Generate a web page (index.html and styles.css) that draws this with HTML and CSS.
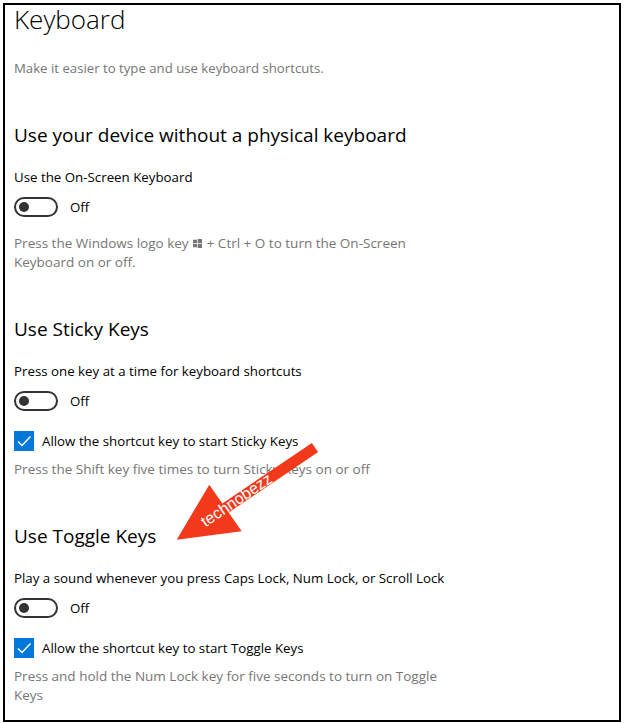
FILE: index.html
```html
<!DOCTYPE html>
<html lang="en">
<head>
    <meta charset="utf-8" />
    <meta name="viewport" content="width=device-width, initial-scale=1" />
    <title>Keyboard - Settings</title>
    <link rel="stylesheet" href="styles.css">
</head>
<body>
    <div class="frame">
        <h1 class="page-title">Keyboard</h1>
        <p class="page-desc">Make it easier to type and use keyboard shortcuts.</p>

        <section class="group">
            <h2 class="group-title">Use your device without a physical keyboard</h2>
            <p class="setting-label">Use the On-Screen Keyboard</p>
            <div class="toggle-row">
                <span class="toggle"></span>
                <span class="toggle-state">Off</span>
            </div>
            <p class="help">
                Press the Windows logo key
                <svg class="win-logo" viewBox="0 0 10 10" aria-hidden="true">
                    <rect x="0" y="0.8" width="4.4" height="3.8" />
                    <rect x="5.2" y="0" width="4.8" height="4.6" />
                    <rect x="0" y="5.4" width="4.4" height="3.8" />
                    <rect x="5.2" y="5.4" width="4.8" height="4.6" />
                </svg>
                + Ctrl + O to turn the On-Screen Keyboard on or off.
            </p>
        </section>

        <section class="group">
            <h2 class="group-title">Use Sticky Keys</h2>
            <p class="setting-label">Press one key at a time for keyboard shortcuts</p>
            <div class="toggle-row">
                <span class="toggle"></span>
                <span class="toggle-state">Off</span>
            </div>
            <label class="check-row">
                <span class="checkbox">
                    <svg viewBox="0 0 20 20" aria-hidden="true"><path d="M4 10.5l4 4 8.5-9" /></svg>
                </span>
                Allow the shortcut key to start Sticky Keys
            </label>
            <p class="help help-tight">Press the Shift key five times to turn Sticky Keys on or off</p>
        </section>

        <section class="group">
            <h2 class="group-title">Use Toggle Keys</h2>
            <p class="setting-label">Play a sound whenever you press Caps Lock, Num Lock, or Scroll Lock</p>
            <div class="toggle-row">
                <span class="toggle"></span>
                <span class="toggle-state">Off</span>
            </div>
            <label class="check-row">
                <span class="checkbox">
                    <svg viewBox="0 0 20 20" aria-hidden="true"><path d="M4 10.5l4 4 8.5-9" /></svg>
                </span>
                Allow the shortcut key to start Toggle Keys
            </label>
            <p class="help help-tight">Press and hold the Num Lock key for five seconds to turn on Toggle Keys</p>
        </section>

        <!-- annotation arrow drawn over the screenshot -->
        <svg class="annotation" viewBox="0 0 618 719" aria-hidden="true">
            <g transform="translate(-3 -3)">
                <polygon class="arrow" points="318.1,450.1 311.9,440.9 222.4,501.4 228.6,510.6" />
                <polygon class="arrow" points="209.3,482.7 241.7,529.3 176.7,537.7" />
                <text class="watermark" x="0" y="0" transform="translate(237 499) rotate(-34)" text-anchor="middle" dominant-baseline="middle">technobezz</text>
            </g>
        </svg>
    </div>
</body>
</html>
```

FILE: styles.css
```css
* {
    margin: 0;
    padding: 0;
    box-sizing: border-box;
}

body {
    font-family: "Open Sans", "Noto Sans", sans-serif;
    font-size: 13.3px;
    color: #000;
    background: #fff;
}

.frame {
    position: relative;
    width: 618px;
    height: 719px;
    margin: 3px 3px 1px 3px;
    border: 2px solid #000;
    padding: 0 9px;
}

.page-title {
    font-size: 26px;
    font-weight: 300;
    line-height: 28px;
}

.page-desc {
    margin-top: 25px;
    line-height: 20px;
    font-size: 13.2px;
    color: #767676;
}

.group-title {
    margin-top: 43px;
    font-size: 19px;
    font-weight: 400;
    line-height: 28px;
}

.setting-label {
    margin-top: 18px;
    line-height: 20px;
}

.toggle-row {
    display: flex;
    align-items: center;
    gap: 12px;
    margin-top: 10px;
    height: 20px;
}

.toggle {
    position: relative;
    width: 44px;
    height: 20px;
    border: 2px solid #333;
    border-radius: 10px;
}

.toggle::after {
    content: "";
    position: absolute;
    top: 3px;
    left: 3px;
    width: 10px;
    height: 10px;
    border-radius: 50%;
    background: #333;
}

.help {
    margin-top: 17px;
    max-width: 436px;
    line-height: 19px;
    font-size: 13.5px;
    color: #767676;
}

.help-tight {
    margin-top: 9px;
}

.win-logo {
    width: 9px;
    height: 9px;
    margin: 0 1px;
    fill: #767676;
    vertical-align: 0;
}

.check-row {
    display: flex;
    align-items: center;
    gap: 8px;
    margin-top: 20px;
    height: 20px;
}

.checkbox {
    width: 20px;
    height: 20px;
    background: #0078d7;
}

.checkbox svg {
    display: block;
    width: 20px;
    height: 20px;
    fill: none;
    stroke: #fff;
    stroke-width: 1.4;
}

.annotation {
    position: absolute;
    top: 0;
    left: -2px;
    width: 618px;
    height: 719px;
    pointer-events: none;
}

.arrow {
    fill: #f2391b;
}

.watermark {
    fill: #fff;
    font-family: "Liberation Sans", sans-serif;
    font-size: 16px;
}
```
